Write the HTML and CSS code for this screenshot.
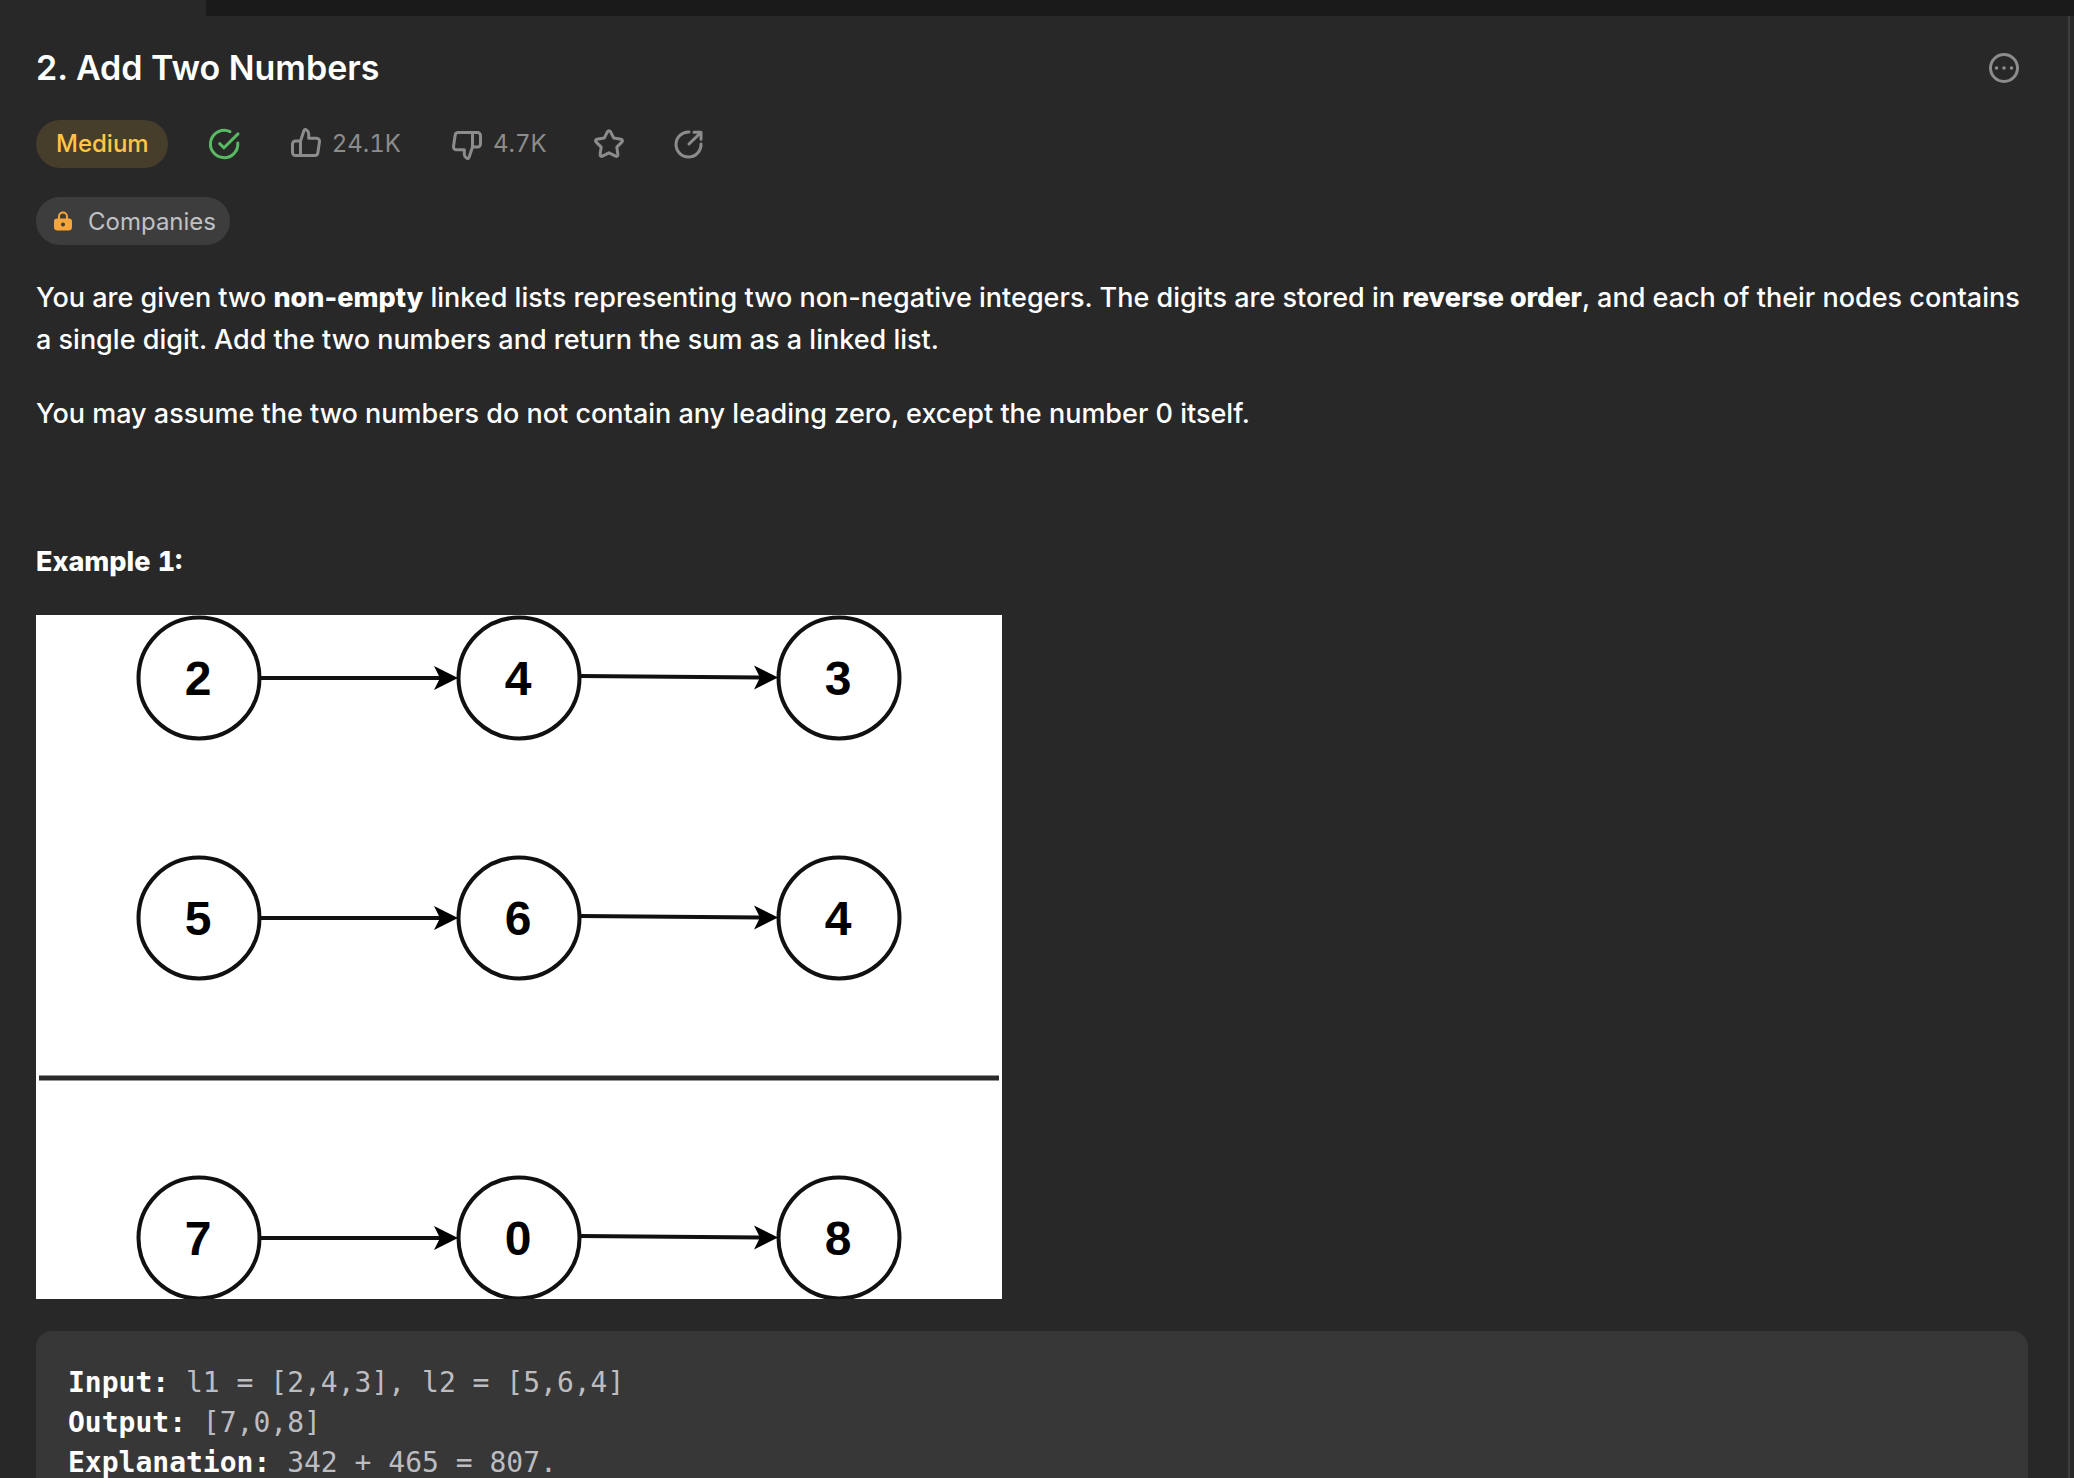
FILE: index.html
```html
<!DOCTYPE html>
<html lang="en">
<head>
<meta charset="utf-8">
<title>Add Two Numbers</title>
<link rel="stylesheet" href="styles.css">
</head>
<body>
<div class="tabstrip"><div class="tab-active"></div></div>
<main class="panel">
  <header class="title-row">
    <h1 class="title">2. Add Two Numbers</h1>
    <button class="icon-btn" type="button" aria-label="More">
      <svg class="icon" viewBox="0 0 36 36"><circle cx="18" cy="18" r="13.5"/><g class="solid"><circle cx="10.5" cy="18" r="1.8"/><circle cx="18" cy="18" r="1.8"/><circle cx="25.5" cy="18" r="1.8"/></g></svg>
    </button>
  </header>

  <div class="stats">
    <span class="pill difficulty">Medium</span>
    <svg class="icon solved" viewBox="0 0 36 36" role="img" aria-label="Solved"><path d="M24 5.6A13.7 13.7 0 1 0 31.8 17M13.7 17.7L18 21.8 32 7.9"/></svg>
    <button class="icon-btn vote" type="button" aria-label="Like, 24.1K">
      <svg class="icon" viewBox="0 0 36 36"><path d="M12.5 29.5V15L16 4.5C16.3 3.3 17.6 3.2 18.6 3.9 20 4.8 20.7 6.5 20.7 8V12.3H28.5A3 3 0 0 1 31.5 15.8L29.8 27A3 3 0 0 1 26.8 29.5H7.5A3 3 0 0 1 4.5 26.5V18A3 3 0 0 1 7.5 15H12.5"/></svg>
      <span>24.1K</span>
    </button>
    <button class="icon-btn vote" type="button" aria-label="Dislike, 4.7K">
      <svg class="icon" viewBox="0 0 36 36"><path transform="rotate(180 18 18)" d="M12.5 29.5V15L16 4.5C16.3 3.3 17.6 3.2 18.6 3.9 20 4.8 20.7 6.5 20.7 8V12.3H28.5A3 3 0 0 1 31.5 15.8L29.8 27A3 3 0 0 1 26.8 29.5H7.5A3 3 0 0 1 4.5 26.5V18A3 3 0 0 1 7.5 15H12.5"/></svg>
      <span>4.7K</span>
    </button>
    <button class="icon-btn favorite" type="button" aria-label="Favorite">
      <svg class="icon" viewBox="0 0 36 36"><path d="M16.6 5.5a1.6 1.6 0 0 1 2.8 0l3.4 6.6 7.3 1.1a1.6 1.6 0 0 1 .9 2.7l-5.2 5.2 1.1 7.4a1.6 1.6 0 0 1-2.3 1.7L18 26.8l-6.6 3.4a1.6 1.6 0 0 1-2.3-1.7l1.1-7.4L5 15.9a1.6 1.6 0 0 1 .9-2.7l7.3-1.1z"/></svg>
    </button>
    <button class="icon-btn" type="button" aria-label="Share">
      <svg class="icon" viewBox="0 0 36 36"><path d="M19 6A12.5 12.5 0 1 0 31 18M19 18L30.6 6.7M24 6.3H31V13.3"/></svg>
    </button>
  </div>

  <button class="pill companies" type="button">
    <svg class="lock" viewBox="0 0 18 20"><path d="M5 8V5.5a4 4 0 0 1 8 0V8" fill="none" stroke="currentColor" stroke-width="2"/><path fill="currentColor" fill-rule="evenodd" d="M3 7.5h12a3 3 0 0 1 3 3V16a3.500 3.500 0 0 1-3.500 3.500h-11A3.500 3.500 0 0 1 0 16v-5.500a3 3 0 0 1 3-3zM9 11.500a2 2 0 1 0 0 4 2 2 0 0 0 0-4z"/></svg>
    Companies
  </button>

  <article class="description">
    <p>You are given two <strong>non-empty</strong> linked lists representing two non-negative integers. The digits are stored in <strong>reverse order</strong>, and each of their nodes contains a single digit. Add the two numbers and return the sum as a linked list.</p>
    <p>You may assume the two numbers do not contain any leading zero, except the number 0 itself.</p>
    <p>&nbsp;</p>
    <p class="example-heading"><strong>Example 1:</strong></p>
    <svg class="diagram" viewBox="0 0 966 684" role="img" aria-label="342 plus 465 equals 807 as linked lists">
      <defs>
        <g id="nodes">
          <circle cx="163" cy="63" r="60.500"/><circle cx="483" cy="63" r="60.500"/><circle cx="803" cy="63" r="60.500"/>
          <path d="M224 63H405M544 61L725 62.500"/>
          <path class="head" d="M422 63L398 75L404 63L398 51ZM742 62.500L718 74.500L724 62.500L718 50.500Z"/>
        </g>
      </defs>
      <use href="#nodes"/>
      <use href="#nodes" y="240"/>
      <use href="#nodes" y="560"/>
      <path class="rule" d="M3 463H963"/>
      <g class="digits">
        <text x="162" y="80">2</text><text x="482" y="80">4</text><text x="802" y="80">3</text>
        <text x="162" y="320">5</text><text x="482" y="320">6</text><text x="802" y="320">4</text>
        <text x="162" y="640">7</text><text x="482" y="640">0</text><text x="802" y="640">8</text>
      </g>
    </svg>
    <pre class="example"><strong>Input:</strong> l1 = [2,4,3], l2 = [5,6,4]
<strong>Output:</strong> [7,0,8]
<strong>Explanation:</strong> 342 + 465 = 807.</pre>
  </article>
</main>
</body>
</html>
```
FILE: styles.css
```css
* {
  box-sizing: border-box;
}

body {
  margin: 0;
  height: 100vh;
  display: flex;
  flex-direction: column;
  background: #282828;
  color: #fff;
  font-family: Inter, "Noto Sans", sans-serif;
}

button {
  margin: 0;
  border: 0;
  padding: 0;
  background: none;
  color: inherit;
  font: inherit;
  cursor: pointer;
}

.tabstrip {
  flex: none;
  height: 16px;
  background: #1a1a1a;
}

.tab-active {
  width: 206px;
  height: 100%;
  background: #282828;
}

.panel {
  flex: 1;
  min-height: 0;
  margin-right: 4px;
  padding: 28px 40px 32px 36px;
  border-right: 2px solid #3e3e3e;
  overflow-y: auto;
  scrollbar-width: none;
}

.title-row {
  display: flex;
  justify-content: space-between;
  align-items: center;
  padding-right: 6px;
  margin-bottom: 28px;
}

.title {
  margin: 0;
  font-size: 34px;
  line-height: 48px;
  font-weight: 600;
}

.icon {
  display: block;
  width: 36px;
  height: 36px;
  fill: none;
  stroke: currentColor;
  stroke-width: 3;
  stroke-linecap: round;
  stroke-linejoin: round;
}

.icon .solid {
  fill: currentColor;
  stroke: none;
}

.icon-btn {
  display: flex;
  align-items: center;
  color: #8c8c8c;
}

.stats {
  display: flex;
  align-items: center;
  margin-bottom: 29px;
  font-size: 24px;
  line-height: 48px;
}

.pill {
  display: inline-flex;
  align-items: center;
  height: 48px;
  border-radius: 24px;
  font-size: 24px;
}

.difficulty {
  padding: 0 19px 0 20px;
  background: #463e2b;
  color: #ffc649;
  font-weight: 500;
}

.solved {
  margin: 0 46px 0 38px;
  color: #57b962;
}

.vote {
  gap: 8px;
  margin-right: 48px;
  font-variant-numeric: tabular-nums;
}

.favorite {
  margin: 0 43px 0 -4px;
}

.companies {
  display: flex;
  gap: 16px;
  padding: 0 14px 0 18px;
  background: #3d3d3d;
  color: #c0c1c5;
}

.lock {
  width: 18px;
  height: 20px;
  color: #f6a43c;
}

.description {
  display: flex;
  flex-direction: column;
  gap: 32px;
  margin-top: 32px;
  font-size: 27px;
  font-weight: 450;
  line-height: 42px;
}

.description p {
  margin: 0;
}

.description strong {
  font-weight: 800;
}

.example-heading {
  font-variant-numeric: tabular-nums;
}

.diagram {
  width: 966px;
  max-width: 100%;
  background: #fff;
  fill: none;
  stroke: #111;
  stroke-width: 4;
}

.diagram .head {
  fill: #000;
  stroke: none;
}

.diagram .rule {
  stroke: #2a2a2a;
  stroke-width: 5;
}

.digits {
  fill: #000;
  stroke: none;
  font: bold 48px "Liberation Sans", Arial, sans-serif;
  text-anchor: middle;
}

.example {
  margin: 0;
  padding: 32px;
  border-radius: 16px;
  background: #373737;
  color: #bdbdc1;
  font-family: "DejaVu Sans Mono", Menlo, monospace;
  font-size: 28px;
  font-weight: 400;
  line-height: 40px;
  white-space: pre-wrap;
}

.description .example strong {
  color: #fff;
  font-weight: 700;
}
```
